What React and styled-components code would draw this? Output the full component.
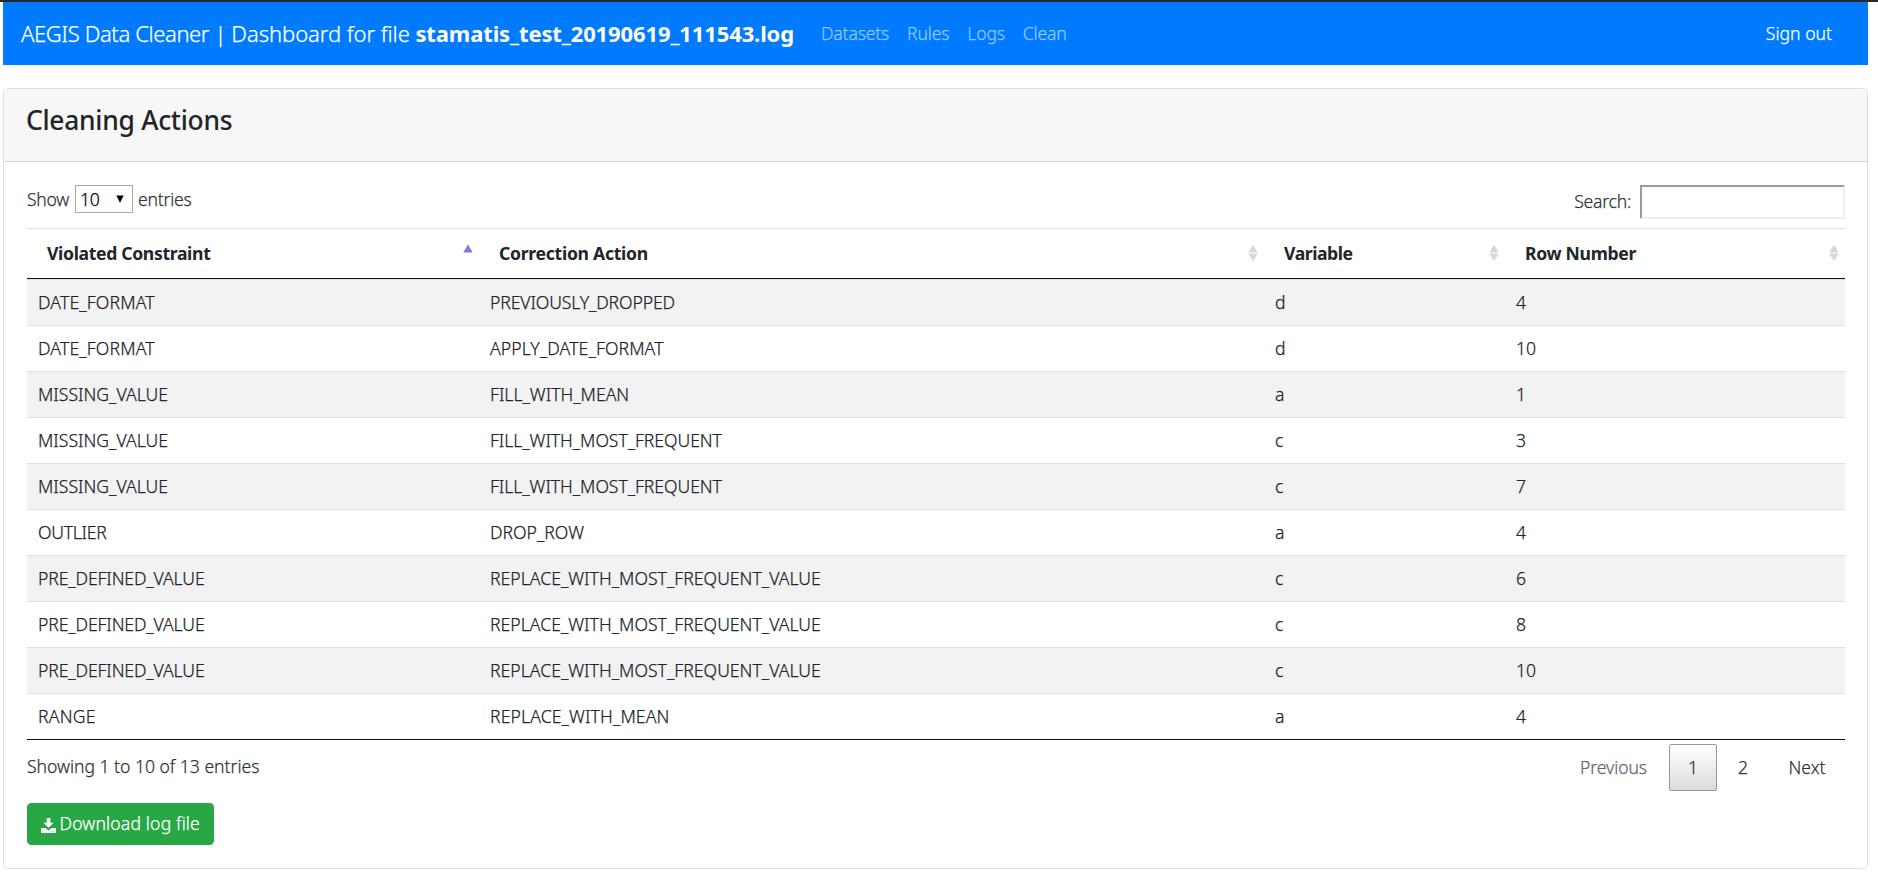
import React from 'react';
import styled, { createGlobalStyle, css } from 'styled-components';

const GlobalStyle = createGlobalStyle`
  *, *::before, *::after { box-sizing: border-box; }
  body {
    margin: 0;
    background: #fff;
    color: #212529;
    font-family: "Noto Sans", "Open Sans", sans-serif;
    font-size: 17.6px;
    font-weight: 300;
    line-height: 26px;
    -webkit-text-stroke: 0.25px currentColor;
  }
`;

const Page = styled.div`
  border-top: 2px solid #26282c;
  padding: 0 10px 0 3px;
`;

const Navbar = styled.nav`
  display: flex;
  align-items: center;
  height: 63px;
  padding: 0 36px 2px 18px;
  background: #007bff;
  color: #fff;
`;

const Brand = styled.a`
  width: 782px;
  margin-right: 18px;
  font-size: 22px;
  letter-spacing: -0.05px;
  white-space: pre;
  b {
    font-weight: 700;
    letter-spacing: -0.12px;
    -webkit-text-stroke: 0;
  }
`;

const AppName = styled.span`
  letter-spacing: -0.39px;
`;

const NavLinks = styled.div`
  display: flex;
  flex: 1;
  gap: 18px;
`;

const NavLink = styled.a`
  color: rgba(255, 255, 255, 0.5);
  letter-spacing: -0.18px;
`;

const SignOut = styled.a`
  color: #fff;
`;

const Card = styled.section`
  margin-top: 23px;
  height: 781px;
  border: 1px solid #dfdfdf;
  border-radius: 4.4px;
  overflow: hidden;
`;

const CardHeader = styled.header`
  height: 73px;
  padding: 15px 22px;
  background: #f7f7f7;
  border-bottom: 1px solid #d8d8d8;
`;

const Title = styled.h4`
  margin: 0;
  font-size: 26.4px;
  font-weight: 500;
  line-height: 32px;
  letter-spacing: -0.27px;
  -webkit-text-stroke: 0;
`;

const CardBody = styled.div`
  padding: 23px 22px 0 23px;
`;

const Controls = styled.div`
  display: flex;
  justify-content: space-between;
  align-items: flex-start;
  height: 43px;
  color: #333;
  letter-spacing: -0.25px;
`;

const LengthLabel = styled.label`
  display: flex;
  align-items: center;
  gap: 5px;
  height: 28px;
`;

const SelectBox = styled.span`
  display: flex;
  align-items: center;
  justify-content: space-between;
  width: 58px;
  height: 28px;
  margin-left: 1px;
  padding: 0 8px 0 4px;
  border: 1px solid #a9a9a9;
  color: #000;
`;

const SearchLabel = styled.label`
  display: flex;
  gap: 9px;
  line-height: 32px;
`;

const SearchInput = styled.input`
  width: 205px;
  height: 34px;
  border: 2px solid;
  border-color: #9a9a9a #eee #eee #9a9a9a;
  background: #fff;
  outline: none;
`;

const Table = styled.table`
  width: 1818px;
  table-layout: fixed;
  border-collapse: separate;
  border-spacing: 0;
  border-bottom: 1px solid #111;
`;

const HeadCell = styled.th`
  height: 51px;
  padding: 0 6px 2px 20px;
  border-top: 1px solid #dee2e6;
  border-bottom: 1px solid #111;
  font-weight: 700;
  text-align: left;
  letter-spacing: ${p => p.$tracking}px;
  -webkit-text-stroke: 0;
`;

const HeadContent = styled.div`
  display: flex;
  align-items: center;
  justify-content: space-between;
`;

const Row = styled.tr`
  background: ${p => (p.$odd ? '#f2f2f2' : '#fff')};
`;

const Cell = styled.td`
  height: 46px;
  padding: 0 11px 2px;
  border-top: 1px solid #dee2e6;
  letter-spacing: ${p => p.$tracking || 0}px;
`;

const Footer = styled.div`
  display: flex;
  justify-content: space-between;
  height: 63px;
  padding-top: 4px;
  color: #333;
`;

const Info = styled.div`
  padding-top: 9px;
  letter-spacing: -0.03px;
`;

const Pager = styled.div`
  display: flex;
  gap: 2px;
`;

const PageButton = styled.a`
  display: flex;
  align-items: center;
  justify-content: center;
  height: 47px;
  width: ${p => p.$width}px;
  padding-bottom: 2px;
  border: 1px solid transparent;
  border-radius: 2px;
  color: ${p => (p.$disabled ? '#666' : '#333')};
  letter-spacing: ${p => (p.$disabled ? -0.1 : 0)}px;
  ${p => p.$current && css`
    border-color: #979797;
    background: linear-gradient(to bottom, #fff 0%, #dcdcdc 100%);
  `}
`;

const DownloadButton = styled.button`
  display: flex;
  align-items: center;
  gap: 3.5px;
  width: 187px;
  height: 42px;
  padding: 0 0 2px 14px;
  border: 0;
  border-radius: 4.4px;
  background: #28a745;
  color: #fff;
  font: inherit;
  letter-spacing: 0.15px;
  white-space: nowrap;
  svg { margin-top: 4px; }
`;

function SortIcon({ sorted }) {
  return (
    <svg width="10" height="18" viewBox="0 0 10 18">
      <path d="M5 0.5 9.7 8.5H0.3Z" fill={sorted ? '#7b7fdc' : '#d8d8d8'} />
      {!sorted && <path d="M0.3 9.5H9.7L5 17.5Z" fill="#d8d8d8" />}
    </svg>
  );
}

function DownloadIcon() {
  return (
    <svg width="15" height="15" viewBox="0 0 16 16" fill="#fff">
      <path d="M6 0h4v5h3.4L8 10.4 2.6 5H6Z" />
      <path fillRule="evenodd" d="M.6 10.600h4.200L8 13.400l3.200-2.800h4.200q.6 0 .6.6v4.100q0 .7-.7.7H.7q-.7 0-.7-.7v-4.100q0-.6.6-.6ZM11 13.500v1h1v-1Zm2.400 0v1h1v-1Z" />
    </svg>
  );
}

const columns = [
  { label: 'Violated Constraint', width: 452, tracking: -0.34, sorted: true },
  { label: 'Correction Action', width: 785, tracking: -0.28 },
  { label: 'Variable', width: 241, tracking: -0.45 },
  { label: 'Row Number', width: 340, tracking: -0.32 },
];

const rows = [
  ['DATE_FORMAT', 'PREVIOUSLY_DROPPED', 'd', 4],
  ['DATE_FORMAT', 'APPLY_DATE_FORMAT', 'd', 10],
  ['MISSING_VALUE', 'FILL_WITH_MEAN', 'a', 1],
  ['MISSING_VALUE', 'FILL_WITH_MOST_FREQUENT', 'c', 3],
  ['MISSING_VALUE', 'FILL_WITH_MOST_FREQUENT', 'c', 7],
  ['OUTLIER', 'DROP_ROW', 'a', 4],
  ['PRE_DEFINED_VALUE', 'REPLACE_WITH_MOST_FREQUENT_VALUE', 'c', 6],
  ['PRE_DEFINED_VALUE', 'REPLACE_WITH_MOST_FREQUENT_VALUE', 'c', 8],
  ['PRE_DEFINED_VALUE', 'REPLACE_WITH_MOST_FREQUENT_VALUE', 'c', 10],
  ['RANGE', 'REPLACE_WITH_MEAN', 'a', 4],
];

const tracking = {
  DATE_FORMAT: 0.15,
  APPLY_DATE_FORMAT: 0.1,
  PREVIOUSLY_DROPPED: -0.12,
  FILL_WITH_MOST_FREQUENT: -0.05,
  OUTLIER: -0.25,
  PRE_DEFINED_VALUE: -0.12,
  RANGE: 0.25,
  REPLACE_WITH_MEAN: 0.12,
  REPLACE_WITH_MOST_FREQUENT_VALUE: 0.02,
};

export default function App() {
  return (
    <>
      <GlobalStyle />
      <Page>
        <Navbar>
          <Brand><AppName>AEGIS Data Cleaner | </AppName>Dashboard for file <b>stamatis_test_20190619_111543.log</b></Brand>
          <NavLinks>
            {['Datasets', 'Rules', 'Logs', 'Clean'].map(t => <NavLink key={t}>{t}</NavLink>)}
          </NavLinks>
          <SignOut>Sign out</SignOut>
        </Navbar>
        <Card>
          <CardHeader><Title>Cleaning Actions</Title></CardHeader>
          <CardBody>
            <Controls>
              <LengthLabel>
                Show
                <SelectBox>
                  10
                  <svg width="8" height="8" viewBox="0 0 8 8"><path d="M0.400 0.500H7.600L4 7.800Z" /></svg>
                </SelectBox>
                entries
              </LengthLabel>
              <SearchLabel>Search:<SearchInput type="search" /></SearchLabel>
            </Controls>
            <Table>
              <colgroup>{columns.map(c => <col key={c.label} width={c.width} />)}</colgroup>
              <thead>
                <tr>
                  {columns.map(c => (
                    <HeadCell key={c.label} $tracking={c.tracking}>
                      <HeadContent>{c.label}<SortIcon sorted={c.sorted} /></HeadContent>
                    </HeadCell>
                  ))}
                </tr>
              </thead>
              <tbody>
                {rows.map((r, i) => (
                  <Row key={i} $odd={i % 2 === 0}>
                    {r.map((v, j) => <Cell key={j} $tracking={tracking[v]}>{v}</Cell>)}
                  </Row>
                ))}
              </tbody>
            </Table>
            <Footer>
              <Info>Showing 1 to 10 of 13 entries</Info>
              <Pager>
                <PageButton $width={107} $disabled>Previous</PageButton>
                <PageButton $width={48} $current>1</PageButton>
                <PageButton $width={48}>2</PageButton>
                <PageButton $width={76}>Next</PageButton>
              </Pager>
            </Footer>
            <DownloadButton><DownloadIcon />Download log file</DownloadButton>
          </CardBody>
        </Card>
      </Page>
    </>
  );
}
